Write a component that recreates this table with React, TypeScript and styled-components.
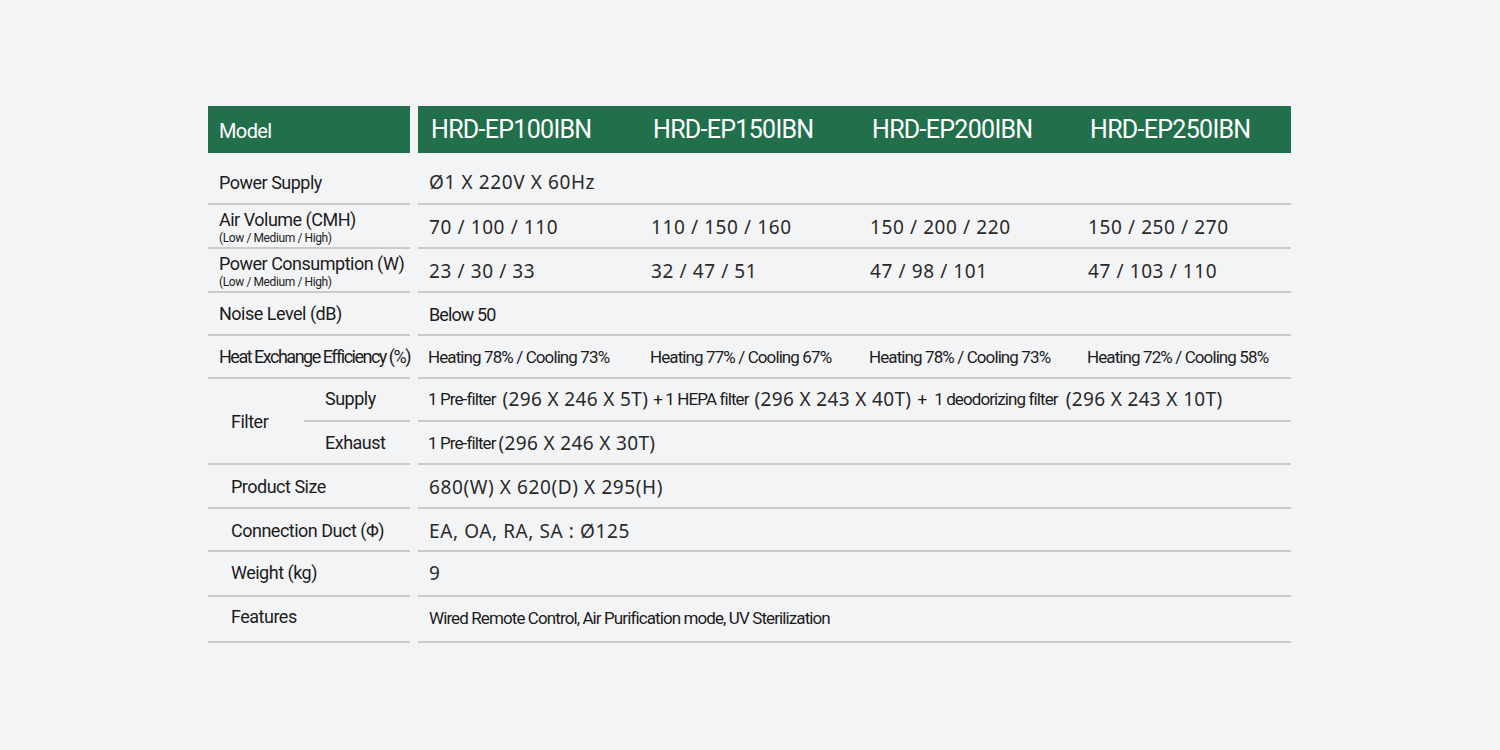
import React from "react";
import styled, { createGlobalStyle } from "styled-components";

const GlobalStyle = createGlobalStyle`
  html, body {
    margin: 0;
    padding: 0;
    background: #f3f4f6;
  }
  body {
    font-family: Roboto, "Noto Sans", Arial, sans-serif;
    color: #1c1c1c;
  }
`;

const GREEN = "#22704b";
const LINE = "#cacaca";

const Page = styled.div`
  padding-top: 106px;
  min-height: 750px;
  box-sizing: border-box;
`;

const SpecTable = styled.div`
  width: 1083px;
  margin-left: 208px;
  display: flex;
  flex-direction: column;
`;

const HeaderRow = styled.div`
  display: grid;
  grid-template-columns: 202px 873px;
  column-gap: 8px;
  height: 47px;
`;

const HeaderLabel = styled.div`
  background: ${GREEN};
  color: #ffffff;
  font-family: Roboto, sans-serif;
  font-size: 20px;
  letter-spacing: -0.6px;
  padding-left: 11px;
  padding-top: 2px;
  display: flex;
  align-items: center;
`;

const ModelGrid = styled.div`
  background: ${GREEN};
  display: grid;
  grid-template-columns: 222px 219px 218px 1fr;
  align-items: center;
`;

const ModelName = styled.div`
  color: #ffffff;
  font-family: Roboto, sans-serif;
  font-size: 25px;
  letter-spacing: -0.7px;
  padding-left: 13px;
`;

const Row = styled.div<{ $h: number }>`
  display: grid;
  grid-template-columns: 202px 873px;
  column-gap: 8px;
  height: ${(p) => p.$h}px;
`;

const LabelCell = styled.div<{ $indent?: number; $top?: number; $bottom?: number }>`
  box-sizing: border-box;
  border-bottom: 2px solid ${LINE};
  padding-left: ${(p) => p.$indent ?? 11}px;
  padding-top: ${(p) => p.$top ?? 0}px;
  padding-bottom: ${(p) => p.$bottom ?? 0}px;
  display: flex;
  flex-direction: column;
  justify-content: center;
`;

const Label = styled.div<{ $tight?: boolean }>`
  font-family: Roboto, sans-serif;
  font-size: 18px;
  line-height: 20px;
  letter-spacing: ${(p) => (p.$tight ? "-1.5px" : "-0.5px")};
  white-space: nowrap;
  color: #1c1c1c;
`;

const SubLabel = styled.div`
  font-family: Roboto, sans-serif;
  font-size: 12px;
  line-height: 16px;
  letter-spacing: -0.4px;
  white-space: nowrap;
  color: #1c1c1c;
`;

const ValueCell = styled.div<{ $top?: number; $bottom?: number }>`
  box-sizing: border-box;
  border-bottom: 2px solid ${LINE};
  padding-top: ${(p) => p.$top ?? 0}px;
  padding-bottom: ${(p) => p.$bottom ?? 0}px;
  display: flex;
  align-items: center;
`;

const ValueGrid = styled.div`
  display: grid;
  grid-template-columns: 222px 219px 218px 1fr;
  width: 100%;
  align-items: center;
`;

const ValueSlot = styled.div<{ $pad?: number }>`
  padding-left: ${(p) => p.$pad ?? 11}px;
  white-space: nowrap;
`;

const Value = styled.span<{ $spacing?: number }>`
  font-family: "Noto Sans", sans-serif;
  font-size: 19px;
  letter-spacing: ${(p) => p.$spacing ?? 0.6}px;
  color: #2a2a2a;
  white-space: pre;
`;

const SmallValue = styled.span<{ $size?: number }>`
  font-family: Roboto, sans-serif;
  font-size: ${(p) => p.$size ?? 17}px;
  letter-spacing: -0.9px;
  color: #1c1c1c;
  white-space: pre;
`;

const SingleValue = styled.div`
  padding-left: 11px;
  white-space: nowrap;
`;

const FilterRow = styled.div`
  display: grid;
  grid-template-columns: 202px 873px;
  column-gap: 8px;
  height: 86px;
`;

const FilterLabelCell = styled.div`
  box-sizing: border-box;
  border-bottom: 2px solid ${LINE};
  display: grid;
  grid-template-columns: 96px 106px;
`;

const FilterMain = styled.div`
  padding-left: 23px;
  display: flex;
  align-items: center;
  padding-top: 1px;
`;

const FilterSubs = styled.div`
  display: grid;
  grid-template-rows: 43px 41px;
`;

const FilterSub = styled.div<{ $divider?: boolean; $bottom?: number }>`
  box-sizing: border-box;
  padding-left: 21px;
  padding-bottom: ${(p) => p.$bottom ?? 0}px;
  display: flex;
  align-items: center;
  border-bottom: ${(p) => (p.$divider ? `2px solid ${LINE}` : "none")};
`;

const FilterValues = styled.div`
  display: grid;
  grid-template-rows: 43px 43px;
`;

const FilterLine = styled.div<{ $bottom?: number }>`
  box-sizing: border-box;
  border-bottom: 2px solid ${LINE};
  padding-left: 10px;
  padding-bottom: ${(p) => p.$bottom ?? 0}px;
  display: flex;
  align-items: center;
  white-space: pre;
`;

const FilterPart = styled.span<{ $gap: number }>`
  margin-left: ${(p) => p.$gap}px;
  display: inline-flex;
  align-items: center;
`;

const models = ["HRD-EP100IBN", "HRD-EP150IBN", "HRD-EP200IBN", "HRD-EP250IBN"];

const airVolume = ["70 / 100 / 110", "110 / 150 / 160", "150 / 200 / 220", "150 / 250 / 270"];
const power = ["23 / 30 / 33", "32 / 47 / 51", "47 / 98 / 101", "47 / 103 / 110"];
const efficiency = [
  "Heating 78% / Cooling 73%",
  "Heating 77% / Cooling 67%",
  "Heating 78% / Cooling 73%",
  "Heating 72% / Cooling 58%",
];

export default function App() {
  return (
    <Page>
      <GlobalStyle />
      <SpecTable>
        <HeaderRow>
          <HeaderLabel>Model</HeaderLabel>
          <ModelGrid>
            {models.map((m) => (
              <ModelName key={m}>{m}</ModelName>
            ))}
          </ModelGrid>
        </HeaderRow>

        <Row $h={52}>
          <LabelCell $top={9}>
            <Label>Power Supply</Label>
          </LabelCell>
          <ValueCell $top={8}>
            <SingleValue>
              <Value>Ø1 X 220V X 60Hz</Value>
            </SingleValue>
          </ValueCell>
        </Row>

        <Row $h={44}>
          <LabelCell $top={4}>
            <Label>Air Volume (CMH)</Label>
            <SubLabel>(Low / Medium / High)</SubLabel>
          </LabelCell>
          <ValueCell $top={2}>
            <ValueGrid>
              {airVolume.map((v, i) => (
                <ValueSlot key={i}>
                  <Value>{v}</Value>
                </ValueSlot>
              ))}
            </ValueGrid>
          </ValueCell>
        </Row>

        <Row $h={44}>
          <LabelCell $top={3}>
            <Label>Power Consumption (W)</Label>
            <SubLabel>(Low / Medium / High)</SubLabel>
          </LabelCell>
          <ValueCell $top={2}>
            <ValueGrid>
              {power.map((v, i) => (
                <ValueSlot key={i}>
                  <Value>{v}</Value>
                </ValueSlot>
              ))}
            </ValueGrid>
          </ValueCell>
        </Row>

        <Row $h={43}>
          <LabelCell $top={1}>
            <Label>Noise Level (dB)</Label>
          </LabelCell>
          <ValueCell $top={1}>
            <SingleValue>
              <SmallValue $size={18}>Below 50</SmallValue>
            </SingleValue>
          </ValueCell>
        </Row>

        <Row $h={43}>
          <LabelCell>
            <Label $tight>Heat Exchange Efficiency (%)</Label>
          </LabelCell>
          <ValueCell>
            <ValueGrid>
              {efficiency.map((v, i) => (
                <ValueSlot key={i} $pad={10}>
                  <SmallValue>{v}</SmallValue>
                </ValueSlot>
              ))}
            </ValueGrid>
          </ValueCell>
        </Row>

        <FilterRow>
          <FilterLabelCell>
            <FilterMain>
              <Label>Filter</Label>
            </FilterMain>
            <FilterSubs>
              <FilterSub $divider $bottom={2}>
                <Label>Supply</Label>
              </FilterSub>
              <FilterSub>
                <Label>Exhaust</Label>
              </FilterSub>
            </FilterSubs>
          </FilterLabelCell>
          <FilterValues>
            <FilterLine $bottom={2}>
              <SmallValue>1 Pre-filter</SmallValue>
              <FilterPart $gap={7}>
                <Value $spacing={0.35}>(296 X 246 X 5T)</Value>
              </FilterPart>
              <FilterPart $gap={5}>
                <SmallValue>+ 1 HEPA filter</SmallValue>
              </FilterPart>
              <FilterPart $gap={6}>
                <Value $spacing={0.35}>(296 X 243 X 40T)</Value>
              </FilterPart>
              <FilterPart $gap={6}>
                <SmallValue>+</SmallValue>
              </FilterPart>
              <FilterPart $gap={8}>
                <SmallValue>1 deodorizing filter</SmallValue>
              </FilterPart>
              <FilterPart $gap={8}>
                <Value $spacing={0.35}>(296 X 243 X 10T)</Value>
              </FilterPart>
            </FilterLine>
            <FilterLine>
              <SmallValue>1 Pre-filter</SmallValue>
              <FilterPart $gap={3}>
                <Value $spacing={0.35}>(296 X 246 X 30T)</Value>
              </FilterPart>
            </FilterLine>
          </FilterValues>
        </FilterRow>

        <Row $h={44}>
          <LabelCell $indent={23} $top={2}>
            <Label>Product Size</Label>
          </LabelCell>
          <ValueCell $top={2}>
            <SingleValue>
              <Value>680(W) X 620(D) X 295(H)</Value>
            </SingleValue>
          </ValueCell>
        </Row>

        <Row $h={43}>
          <LabelCell $indent={23} $top={2}>
            <Label>Connection Duct (Φ)</Label>
          </LabelCell>
          <ValueCell $top={2}>
            <SingleValue>
              <Value>EA, OA, RA, SA : Ø125</Value>
            </SingleValue>
          </ValueCell>
        </Row>

        <Row $h={45}>
          <LabelCell $indent={23} $bottom={2}>
            <Label>Weight (kg)</Label>
          </LabelCell>
          <ValueCell $bottom={2}>
            <SingleValue>
              <Value>9</Value>
            </SingleValue>
          </ValueCell>
        </Row>

        <Row $h={46}>
          <LabelCell $indent={23} $bottom={4}>
            <Label>Features</Label>
          </LabelCell>
          <ValueCell $bottom={3}>
            <SingleValue>
              <SmallValue>Wired Remote Control, Air Purification mode, UV Sterilization</SmallValue>
            </SingleValue>
          </ValueCell>
        </Row>
      </SpecTable>
    </Page>
  );
}
